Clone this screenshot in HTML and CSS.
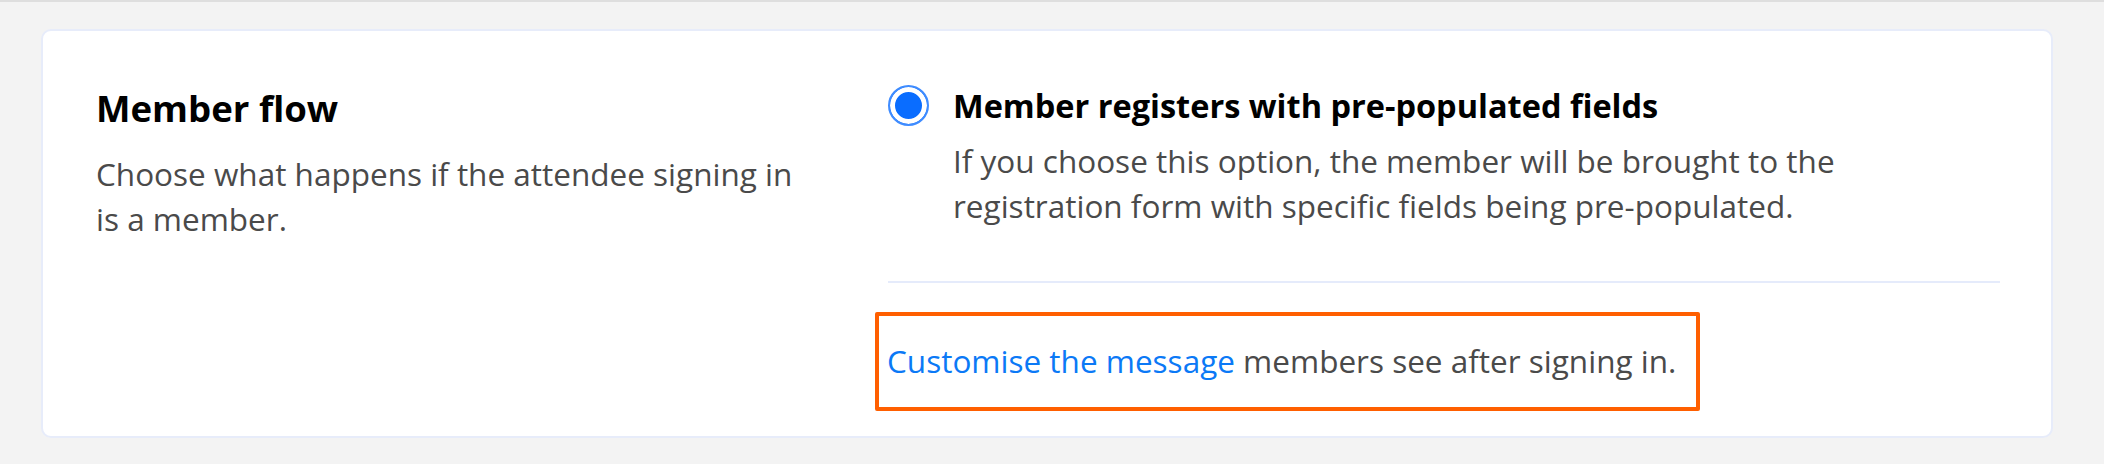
FILE: index.html
```html
<!DOCTYPE html>
<html lang="en">
<head>
<meta charset="utf-8">
<title>Member flow</title>
<link rel="stylesheet" href="styles.css">
</head>
<body>
<div class="page">
  <section class="card">
    <div class="intro">
      <h2 class="intro-title">Member flow</h2>
      <p class="intro-text">Choose what happens if the attendee signing in is a member.</p>
    </div>
    <div class="options">
      <div class="option">
        <span class="radio" aria-checked="true" role="radio"></span>
        <div class="option-body">
          <div class="option-title">Member registers with pre-populated fields</div>
          <p class="option-text">If you choose this option, the member will be brought to the registration form with specific fields being pre-populated.</p>
        </div>
      </div>
      <hr class="divider">
      <div class="message">
        <a class="message-link" href="#">Customise the message</a> members see after signing in.
      </div>
    </div>
  </section>
</div>
</body>
</html>
```
FILE: styles.css
```css
html, body {
  margin: 0;
  padding: 0;
}
body {
  background: #f3f3f3;
  border-top: 2px solid #dedede;
  font-family: "Open Sans", "Noto Sans", sans-serif;
  color: #4a4a4a;
}
.page {
  padding: 27px 51px 28px 41px;
}
.card {
  background: #fff;
  border: 2px solid #e7ecfa;
  border-radius: 10px;
  padding: 54px 51px 25px 53px;
  display: grid;
  grid-template-columns: 792px 1fr;
  align-items: start;
}
.intro-title {
  margin: 0;
  font-size: 36.6px;
  line-height: 46px;
  font-weight: 700;
  color: #000;
}
.intro-text {
  margin: 20px 0 0;
  max-width: 718px;
  font-size: 31.5px;
  line-height: 45px;
  color: #4a4a4a;
}
.option {
  display: flex;
  align-items: flex-start;
  gap: 24px;
}
.radio {
  flex: none;
  width: 41px;
  height: 41px;
  box-sizing: border-box;
  border-radius: 50%;
  border: 2px solid #3f8cff;
  background: #0a6dff;
  box-shadow: inset 0 0 0 5px #fff;
}
.option-title {
  font-size: 32.5px;
  line-height: 41px;
  font-weight: 700;
  color: #000;
}
.option-text {
  margin: 12px 0 0;
  max-width: 940px;
  font-size: 31.5px;
  line-height: 45px;
  color: #4a4a4a;
}
.divider {
  margin: 53px 0 0;
  border: 0;
  height: 2px;
  background: #e5ebfb;
}
.message {
  margin: 29px 0 0 -13px;
  width: fit-content;
  border: 4px solid #ff5f00;
  border-radius: 2px;
  padding: 22px 20px 24px 8px;
  font-size: 31.5px;
  line-height: 45px;
  color: #4a4a4a;
}
.message-link {
  color: #0b79f6;
  text-decoration: none;
}
```
